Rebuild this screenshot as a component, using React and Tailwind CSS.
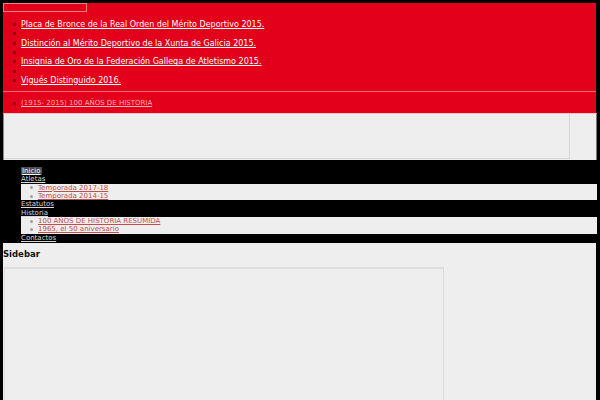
import React from 'react';

const awards = [
  'Placa de Bronce de la Real Orden del Mérito Deportivo 2015.',
  '',
  'Distinción al Mérito Deportivo de la Xunta de Galicia 2015.',
  '',
  'Insignia de Oro de la Federación Gallega de Atletismo 2015.',
  '',
  'Vigués Distinguido 2016.',
];

function Bullet({ className }) {
  return <span className={`inline-block shrink-0 w-[3px] h-[3px] mr-[5px] ${className}`} />;
}

function SubMenu({ items }) {
  return (
    <ul className="ml-[18px] bg-[#eeeeee]">
      {items.map((t) => (
        <li key={t} className="flex items-center pl-[9px] h-[8.35px]">
          <span className="inline-block w-[3px] h-[3px] rounded-full bg-[#a0a0a0] mr-[5px]" />
          <a href="#" className="text-[#c0504d] underline">{t}</a>
        </li>
      ))}
    </ul>
  );
}

export default function App() {
  return (
    <div
      className="min-h-[400px] bg-black pt-[3px] px-[3px] overflow-hidden"
      style={{ fontFamily: '"DejaVu Sans", sans-serif' }}
    >
      {/* Header band */}
      <div className="h-[110px] bg-[#e2001a] w-[593px]">
        <div className="w-[84px] h-[9px] border border-[#f07a86]" />
        <ul className="mt-[8px] text-[8px] leading-[9.3px] text-white">
          {awards.map((t, i) => (
            <li key={i} className="flex items-center pl-[10px] h-[9.3px]">
              <Bullet className="bg-[#8e0012]" />
              {t && <a href="#" className="underline">{t}</a>}
            </li>
          ))}
        </ul>
        <div className="mt-[6px] border-t border-[#f26a78]" />
        <ul className="mt-[7px] text-[7px] leading-[8px]">
          <li className="flex items-center pl-[10px]">
            <Bullet className="bg-[#8e0012]" />
            <a href="#" className="underline text-[#f7b3b8]">(1915- 2015) 100 AÑOS DE HISTORIA</a>
          </li>
        </ul>
      </div>

      {/* Gray widget box */}
      <div className="h-[47px] w-[594px] bg-[#eeeeee] border-l border-[#8a8a8a] border-r border-r-[#777] border-t border-t-[#f3c6ca]">
        <div className="h-[45px] w-[566px] border-r border-b border-[#d6d6d6]" />
      </div>

      {/* Navigation */}
      <nav className="pt-[7px] text-[7px] leading-[8.35px] text-[#d8d8d8]">
        <ul>
          <li className="pl-[18px] h-[8.35px]">
            <a href="#" className="underline bg-[#4a4a4a] text-white px-[1px]">Inicio</a>
          </li>
          <li className="pl-[18px] h-[8.35px]"><a href="#" className="underline">Atletas</a></li>
          <li><SubMenu items={['Temporada 2017-18', 'Temporada 2014-15']} /></li>
          <li className="pl-[18px] h-[8.35px]"><a href="#" className="underline">Estatutos</a></li>
          <li className="pl-[18px] h-[8.35px]"><a href="#" className="underline">Historia</a></li>
          <li><SubMenu items={['100 AÑOS DE HISTORIA RESUMIDA', '1965, el 50 aniversario']} /></li>
          <li className="pl-[18px] h-[8.35px]"><a href="#" className="underline">Contactos</a></li>
        </ul>
      </nav>

      {/* Sidebar */}
      <div className="mt-[1px] w-[593px] min-h-[160px] bg-[#eeeeee] pt-[6px]">
        <h2 className="text-[8.5px] leading-[10px] font-bold text-[#111]">Sidebar</h2>
        <div className="mt-[8px] ml-[1px] w-[440px] h-[140px] border-t-2 border-l border-r border-[#dcdcdc]" />
      </div>
    </div>
  );
}
